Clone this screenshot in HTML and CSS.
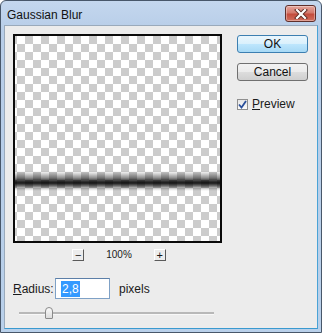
FILE: index.html
```html
<!DOCTYPE html>
<html lang="en">
<head>
    <meta charset="UTF-8">
    <title>Gaussian Blur</title>
    <link rel="stylesheet" href="styles.css">
</head>
<body>
<div class="window">
    <div class="titlebar">
        <span class="title">Gaussian Blur</span>
        <button class="close-btn">
            <svg width="14" height="10" viewBox="0 0 14 10">
                <path d="M3 1 L11 9 M11 1 L3 9" stroke="#5a2a24" stroke-width="4" stroke-linecap="square"/>
                <path d="M3 1 L11 9 M11 1 L3 9" stroke="#fff" stroke-width="2.2" stroke-linecap="square"/>
            </svg>
        </button>
    </div>
    <div class="client">
        <div class="left-col">
            <div class="preview"></div>
            <div class="zoom-row">
                <span class="zoom-btn">&minus;</span>
                <span class="zoom-text">100%</span>
                <span class="zoom-btn">+</span>
            </div>
            <div class="radius-row">
                <label><u>R</u>adius:</label>
                <div class="field"><span class="sel">2,8</span></div>
                <span>pixels</span>
            </div>
            <div class="slider">
                <div class="track"></div>
                <div class="thumb"></div>
            </div>
        </div>
        <div class="right-col">
            <button class="btn btn-default">OK</button>
            <button class="btn">Cancel</button>
            <div class="check-row">
                <span class="checkbox">
                    <svg width="9" height="9" viewBox="0 0 9 9">
                        <path d="M1 4.5 L3.5 7.5 L8 1" fill="none" stroke="#2a4f9a" stroke-width="1.8"/>
                    </svg>
                </span>
                <span><u>P</u>review</span>
            </div>
        </div>
    </div>
</div>
</body>
</html>
```

FILE: styles.css
```css
body {
  margin: 0;
  font-family: "Liberation Sans", Arial, sans-serif;
  font-size: 12px;
  color: #1a1a1a;
}

.window {
  width: 322px;
  height: 333px;
  box-sizing: border-box;
  border: 1px solid #48576a;
  border-radius: 6px 6px 0 0;
  background: linear-gradient(#c4d7ee, #b7cde8 30px, #b9d0ea);
  display: flex;
  flex-direction: column;
}

.titlebar {
  height: 24px;
  display: flex;
  justify-content: space-between;
  align-items: flex-start;
  padding: 4px 5px 0 6px;
  box-sizing: border-box;
}

.title {
  font-size: 12px;
  margin-top: 3px;
  color: #111;
}

.close-btn {
  width: 31px;
  height: 17px;
  padding: 0;
  border: 1px solid #5f2f2b;
  border-radius: 3px;
  background: linear-gradient(#e4a69d, #d47a6d 45%, #c44c3d 55%, #d0705f);
  display: flex;
  align-items: center;
  justify-content: center;
  box-shadow: inset 0 0 0 1px rgba(255,255,255,0.35);
}

.client {
  flex: 1;
  margin: 0 3px 3px 3px;
  background: #ececec;
  border: 1px solid #9aaabb;
  border-bottom-color: #3a9ad0;
  border-right-color: #4aa3d6;
  display: flex;
  padding: 8px 0 0 8px;
}

.left-col {
  width: 209px;
  display: flex;
  flex-direction: column;
}

.preview {
  width: 209px;
  height: 209px;
  box-sizing: border-box;
  border: 2px solid #0a0a0a;
  background-image:
    linear-gradient(rgba(0,0,0,0) 135px, rgba(0,0,0,0.18) 138px, rgba(0,0,0,0.45) 142px, rgba(0,0,0,0.78) 145px, rgba(0,0,0,0.9) 147px, rgba(0,0,0,0.55) 150px, rgba(0,0,0,0.12) 153px, rgba(0,0,0,0) 155px),
    conic-gradient(#cccccc 25%, #ffffff 0 50%, #cccccc 0 75%, #ffffff 0);
  background-size: 100% 100%, 16px 16px;
  background-repeat: no-repeat, repeat;
  background-position: 0 0, 2px 0;
}

.zoom-row {
  display: flex;
  justify-content: center;
  align-items: center;
  gap: 22px;
  margin-top: 5px;
  margin-left: 3px;
  height: 13px;
}

.zoom-btn {
  width: 12px;
  height: 12px;
  box-sizing: border-box;
  border: 1px solid;
  border-color: #fff #5a5a5a #5a5a5a #fff;
  font-size: 11px;
  line-height: 10px;
  text-align: center;
}

.zoom-text {
  font-size: 10px;
}

.radius-row {
  display: flex;
  align-items: center;
  margin-top: 17px;
  gap: 9px;
  font-size: 12px;
}

.radius-row label {
  width: 33px;
}

.field {
  width: 55px;
  height: 21px;
  box-sizing: border-box;
  border: 1px solid #7fa1c6;
  border-top-color: #5c7fa8;
  background: #fff;
  padding: 3px 0 0 5px;
}

.sel {
  background: #3399ff;
  color: #fff;
  padding: 1px 1px;
}

.slider {
  position: relative;
  height: 14px;
  margin-top: 8px;
  margin-left: 6px;
  width: 195px;
}

.track {
  margin-top: 5px;
  height: 2px;
  background: #b8b8b8;
  border-bottom: 1px solid #f8f8f8;
}

/* thumb sits over the track */
.thumb {
  position: absolute;
  left: 26px;
  top: 0;
  width: 8px;
  height: 12px;
  box-sizing: border-box;
  border: 1px solid #8a8a8a;
  border-radius: 4px 4px 1px 1px;
  background: linear-gradient(#fafafa, #dcdcdc);
}

.right-col {
  margin-left: 15px;
  width: 71px;
  display: flex;
  flex-direction: column;
  padding-top: 1px;
}

.btn {
  width: 71px;
  height: 18px;
  padding: 0;
  font-family: "Liberation Sans", Arial, sans-serif;
  font-size: 12px;
  color: #111;
  border: 1px solid #707070;
  border-radius: 3px;
  background: linear-gradient(#f2f2f2, #ebebeb 50%, #dddddd 50%, #cfcfcf);
  margin-bottom: 10px;
}

.btn-default {
  border-color: #3c7fb1;
  background: linear-gradient(#eaf6fd, #d9f0fc 50%, #bee6fd 50%, #a7d9f5);
}

.check-row {
  display: flex;
  align-items: center;
  gap: 4px;
  margin-top: 6px;
  font-size: 12px;
}

.checkbox {
  width: 11px;
  height: 11px;
  box-sizing: border-box;
  border: 1px solid #8f8f8f;
  background: linear-gradient(#e6e6e6, #fbfbfb);
  display: flex;
  align-items: center;
  justify-content: center;
}
```
